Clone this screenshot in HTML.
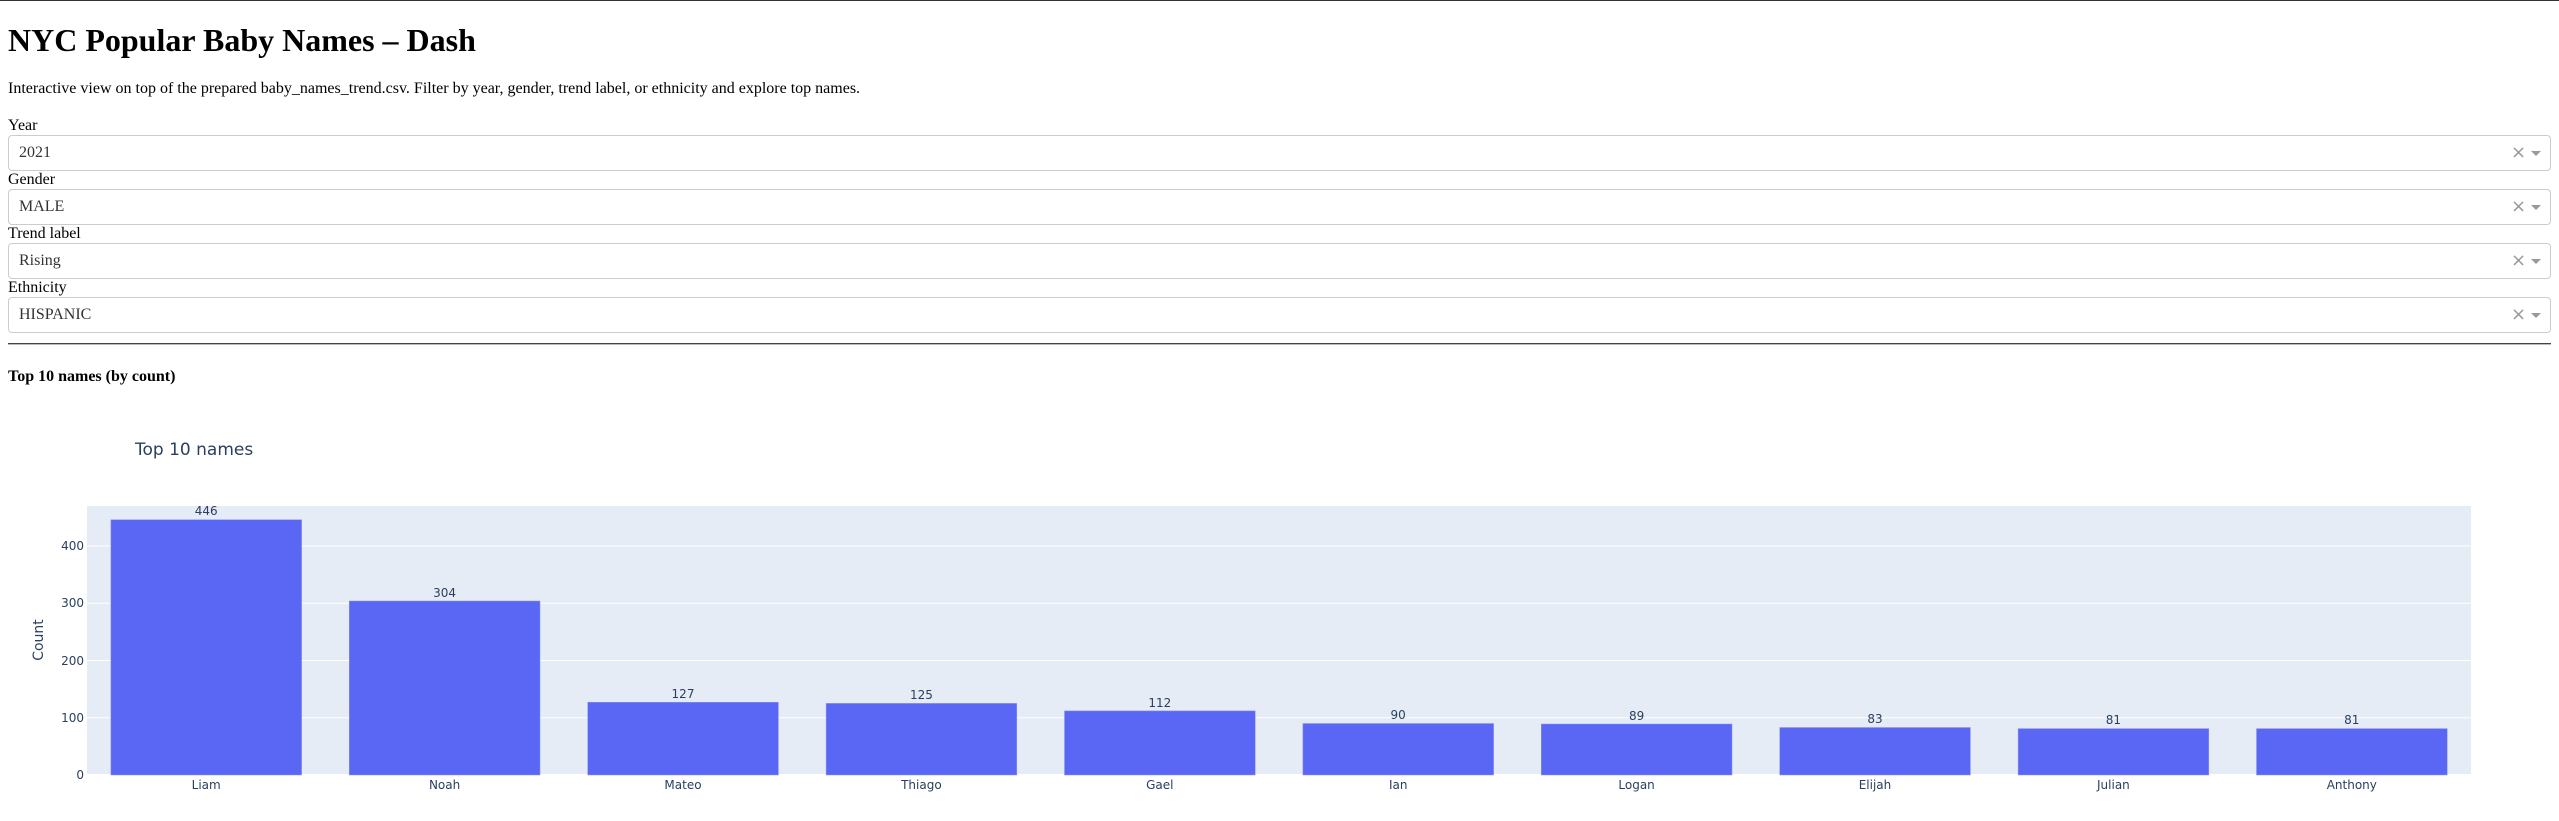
<!DOCTYPE html>
<html><head><meta charset="utf-8"><style>
html,body{margin:0;padding:0;background:#fff;width:2559px;height:821px;overflow:hidden;position:relative;font-family:"Liberation Serif",serif;color:#000}
.a{position:absolute;white-space:nowrap}
h1{position:absolute;margin:0;left:8px;top:22px;font-size:32px;line-height:37px;font-weight:bold}
.lbl{position:absolute;left:8px;font-size:16px;line-height:18px}
.box{position:absolute;left:8px;width:2541px;height:34px;border:1px solid #ccc;border-radius:4px;background:#fff}
.box .v{position:absolute;left:10px;top:0;line-height:34px;font-size:16px;color:#333}
.box .x{position:absolute;left:2502px;top:0;line-height:34px;font-size:18px;color:#999;font-family:"DejaVu Sans",sans-serif}
.box .c{position:absolute;left:2522px;top:15px;width:0;height:0;border-left:5px solid transparent;border-right:5px solid transparent;border-top:5px solid #999}
</style></head><body>
<div class="a" style="left:0;top:0;width:2559px;height:1px;background:#333"></div>
<h1>NYC Popular Baby Names – Dash</h1>
<div class="a" style="left:8px;top:80px;font-size:16px;line-height:18px">Interactive view on top of the prepared baby_names_trend.csv. Filter by year, gender, trend label, or ethnicity and explore top names.</div>
<div class="lbl" style="top:117px">Year</div>
<div class="box" style="top:135px"><span class="v">2021</span><span class="x">×</span><span class="c"></span></div>
<div class="lbl" style="top:171px">Gender</div>
<div class="box" style="top:189px"><span class="v">MALE</span><span class="x">×</span><span class="c"></span></div>
<div class="lbl" style="top:225px">Trend label</div>
<div class="box" style="top:243px"><span class="v">Rising</span><span class="x">×</span><span class="c"></span></div>
<div class="lbl" style="top:279px">Ethnicity</div>
<div class="box" style="top:297px"><span class="v">HISPANIC</span><span class="x">×</span><span class="c"></span></div>
<div class="a" style="left:8px;top:343px;width:2543px;height:1px;background:#444;border-bottom:1px solid #bbb"></div>
<div class="a" style="left:8px;top:368px;font-size:16px;line-height:18px;font-weight:bold">Top 10 names (by count)</div>
<svg class="a" style="left:0;top:0" width="2559" height="821" xmlns="http://www.w3.org/2000/svg" font-family="DejaVu Sans, Liberation Sans, sans-serif" fill="#2a3f5f">
<text x="135" y="455" font-size="17">Top 10 names</text>
<rect x="87" y="506" width="2384" height="269" fill="#e5ecf6"/>
<g stroke="#fff" stroke-width="1">
<line x1="87" x2="2471" y1="717.75" y2="717.75"/>
<line x1="87" x2="2471" y1="660.5" y2="660.5"/>
<line x1="87" x2="2471" y1="603.25" y2="603.25"/>
<line x1="87" x2="2471" y1="546" y2="546"/>
<line x1="87" x2="2471" y1="775" y2="775" stroke-width="2"/>
</g>
<g fill="#5a67f5" stroke="#8c93f5" stroke-width="0.5">
<rect x="110.9" y="519.7" width="190.7" height="255.3"/>
<rect x="349.3" y="601.0" width="190.7" height="174"/>
<rect x="587.7" y="702.3" width="190.7" height="72.7"/>
<rect x="826.1" y="703.4" width="190.7" height="71.6"/>
<rect x="1064.5" y="710.9" width="190.7" height="64.1"/>
<rect x="1302.9" y="723.5" width="190.7" height="51.5"/>
<rect x="1541.3" y="724.0" width="190.7" height="51"/>
<rect x="1779.7" y="727.5" width="190.7" height="47.5"/>
<rect x="2018.1" y="728.6" width="190.7" height="46.4"/>
<rect x="2256.5" y="728.6" width="190.7" height="46.4"/>
</g>
<g font-size="12" text-anchor="middle">
<text x="206.2" y="515">446</text>
<text x="444.6" y="597">304</text>
<text x="683" y="698">127</text>
<text x="921.4" y="699">125</text>
<text x="1159.8" y="707">112</text>
<text x="1398.2" y="719">90</text>
<text x="1636.6" y="720">89</text>
<text x="1875" y="723">83</text>
<text x="2113.4" y="724">81</text>
<text x="2351.8" y="724">81</text>
</g>
<g font-size="12" text-anchor="middle">
<text x="206.2" y="789">Liam</text>
<text x="444.6" y="789">Noah</text>
<text x="683" y="789">Mateo</text>
<text x="921.4" y="789">Thiago</text>
<text x="1159.8" y="789">Gael</text>
<text x="1398.2" y="789">Ian</text>
<text x="1636.6" y="789">Logan</text>
<text x="1875" y="789">Elijah</text>
<text x="2113.4" y="789">Julian</text>
<text x="2351.8" y="789">Anthony</text>
</g>
<g font-size="12" text-anchor="end">
<text x="84" y="779">0</text>
<text x="84" y="722">100</text>
<text x="84" y="665">200</text>
<text x="84" y="607">300</text>
<text x="84" y="550">400</text>
</g>
<text x="0" y="0" font-size="14" text-anchor="middle" transform="translate(43,640) rotate(-90)">Count</text>
</svg>
</body></html>
